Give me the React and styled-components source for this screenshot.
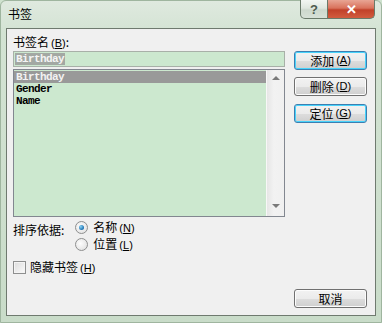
import React from "react"
import styled, { createGlobalStyle } from "styled-components"

const Global = createGlobalStyle`
  html, body { margin: 0; padding: 0; background: #cfe2cf; }
  body { font-family: "Noto Sans CJK SC", "Liberation Sans", sans-serif; font-size: 12px; color: #000; }
`

const Frame = styled.div`
  width: 382px;
  height: 323px;
  box-sizing: border-box;
  display: flex;
  flex-direction: column;
  background: linear-gradient(180deg, #dfe9df 0%, #d3e3d3 10%, #c9dcc9 100%);
  border: 1px solid #9fb59f;
  border-radius: 6px 6px 0 0;
`

const TitleBar = styled.div`
  height: 27px;
  display: flex;
  align-items: flex-start;
  padding-left: 7px;
`

const Title = styled.div`
  margin-top: 6px;
  font-size: 12px;
  line-height: 14px;
  color: #000;
`

const Caption = styled.div`
  margin-left: auto;
  margin-right: 6px;
  display: flex;
  margin-top: -1px;
`

const CapBtn = styled.div`
  height: 19px;
  width: ${p => p.$w}px;
  box-sizing: border-box;
  border: 1px solid #6a7a6a;
  border-top: none;
  display: flex;
  align-items: center;
  justify-content: center;
  color: ${p => (p.$close ? "#fff" : "#4d5a4d")};
  font-family: "Liberation Sans", sans-serif;
  font-weight: bold;
  font-size: 13px;
  background: ${p =>
    p.$close
      ? "linear-gradient(180deg, #e8a594 0%, #d9725c 45%, #c1412a 55%, #d25c3f 100%)"
      : "linear-gradient(180deg, #f2f6f2 0%, #dfe7df 45%, #cdd8cd 55%, #d7e1d7 100%)"};
  border-radius: ${p => (p.$close ? "0 0 5px 0" : "0 0 0 5px")};
  & + & { border-left: none; }
`

const Client = styled.div`
  flex: 1;
  margin: 0 5px 6px 5px;
  box-sizing: border-box;
  border: 1px solid #6f7a6f;
  background: #f0f0f0;
  display: flex;
  padding: 5px 7px 7px 6px;
  gap: 9px;
`

const LeftCol = styled.div`
  width: 272px;
  display: flex;
  flex-direction: column;
`

const RightCol = styled.div`
  width: 73px;
  display: flex;
  flex-direction: column;
  padding-top: 17px;
`

const Label = styled.div`
  height: 16px;
  line-height: 16px;
  margin-bottom: 1px;
`

const Key = styled.span`
  font-family: "Liberation Sans", sans-serif;
  font-size: 11px;
  margin-left: 2px;
  u { text-decoration-thickness: 1px; }
`

const Input = styled.div`
  height: 16px;
  box-sizing: border-box;
  border: 1px solid #a8b0a8;
  background: #cce8cf;
  padding: 1px 1px;
  display: flex;
  align-items: center;
`

const Mono = styled.span`
  font-family: "Liberation Mono", monospace;
  font-size: 11px;
  font-weight: bold;
  letter-spacing: -0.6px;
  line-height: 12px;
  height: 12px;
  padding: 0 1px;
  background: ${p => (p.$sel ? "#a3a8a3" : "transparent")};
  color: ${p => (p.$sel ? "#f4f4f4" : "#000")};
`

const List = styled.div`
  margin-top: 2px;
  height: 148px;
  box-sizing: border-box;
  border: 1px solid #828790;
  background: #cce8cf;
  display: flex;
`

const Items = styled.div`
  flex: 1;
  padding-top: 1px;
  display: flex;
  flex-direction: column;
`

const Item = styled.div`
  height: 12px;
  line-height: 12px;
  padding-left: 2px;
  font-family: "Liberation Mono", monospace;
  font-size: 11px;
  letter-spacing: -0.6px;
  font-weight: bold;
  background: ${p => (p.$sel ? "#999999" : "transparent")};
  color: ${p => (p.$sel ? "#f2f2f2" : "#000")};
`

const ScrollBar = styled.div`
  width: 17px;
  border-left: 1px solid #f7f7f7;
  background: linear-gradient(90deg, #e6e6e6, #f2f2f2 40%, #f0f0f0);
  display: flex;
  flex-direction: column;
  justify-content: space-between;
  align-items: center;
  padding: 6px 0 8px;
`

const Arrow = styled.div`
  width: 0;
  height: 0;
  border-left: 4px solid transparent;
  border-right: 4px solid transparent;
  ${p =>
    p.$down
      ? "border-top: 4px solid #7a7a7a;"
      : "border-bottom: 4px solid #7a7a7a;"}
`

const SortRow = styled.div`
  margin-top: 4px;
  display: flex;
  gap: 11px;
`

const Radios = styled.div`
  display: flex;
  flex-direction: column;
  gap: 4px;
`

const Choice = styled.div`
  display: flex;
  align-items: center;
  gap: 5px;
  height: 13px;
  line-height: 13px;
`

const Radio = styled.div`
  width: 11px;
  height: 11px;
  border-radius: 50%;
  border: 1px solid #8e8f8f;
  background: radial-gradient(circle at 40% 40%, #fdfdfd, #dcdcdc);
  display: flex;
  align-items: center;
  justify-content: center;
  &::after {
    content: "";
    display: ${p => (p.$on ? "block" : "none")};
    width: 5px;
    height: 5px;
    border-radius: 50%;
    background: radial-gradient(circle at 35% 35%, #8ad4f5, #1b6fb0 70%);
  }
`

const CheckRow = styled.div`
  margin-top: 10px;
  display: flex;
  align-items: center;
  gap: 4px;
  height: 13px;
  line-height: 13px;
`

const Check = styled.div`
  width: 11px;
  height: 11px;
  border: 1px solid #8e8f8f;
  background: linear-gradient(135deg, #dcdcdc, #fbfbfb);
  box-shadow: inset 0 0 0 1px #f4f4f4;
`

const Button = styled.div`
  height: 19px;
  box-sizing: border-box;
  margin-bottom: ${p => p.$mb || 0}px;
  border: 1px solid ${p => (p.$focus ? "#3c7fb1" : "#707070")};
  border-radius: 3px;
  box-shadow: ${p => (p.$focus ? "inset 0 0 0 1px #48d3fb" : "inset 0 0 0 1px #fcfcfc")};
  background: linear-gradient(180deg, #f2f2f2 0%, #ebebeb 50%, #dddddd 51%, #cfcfcf 100%);
  display: flex;
  align-items: center;
  justify-content: center;
  line-height: 17px;
  font-size: 12px;
`

const Spacer = styled.div`
  flex: 1;
`

const k = c => (
  <Key>
    (<u>{c}</u>)
  </Key>
)

export default function App() {
  return (
    <>
      <Global />
      <Frame>
        <TitleBar>
          <Title>书签</Title>
          <Caption>
            <CapBtn $w={28}>?</CapBtn>
            <CapBtn $w={47} $close>✕</CapBtn>
          </Caption>
        </TitleBar>
        <Client>
          <LeftCol>
            <Label>书签名{k("B")}:</Label>
            <Input>
              <Mono $sel>Birthday</Mono>
            </Input>
            <List>
              <Items>
                <Item $sel>Birthday</Item>
                <Item>Gender</Item>
                <Item>Name</Item>
              </Items>
              <ScrollBar>
                <Arrow />
                <Arrow $down />
              </ScrollBar>
            </List>
            <SortRow>
              <span>排序依据:</span>
              <Radios>
                <Choice>
                  <Radio $on />
                  <span>名称{k("N")}</span>
                </Choice>
                <Choice>
                  <Radio />
                  <span>位置{k("L")}</span>
                </Choice>
              </Radios>
            </SortRow>
            <CheckRow>
              <Check />
              <span>隐藏书签{k("H")}</span>
            </CheckRow>
          </LeftCol>
          <RightCol>
            <Button $focus $mb={7}>添加{k("A")}</Button>
            <Button $mb={8}>删除{k("D")}</Button>
            <Button $focus>定位{k("G")}</Button>
            <Spacer />
            <Button>取消</Button>
          </RightCol>
        </Client>
      </Frame>
    </>
  )
}
